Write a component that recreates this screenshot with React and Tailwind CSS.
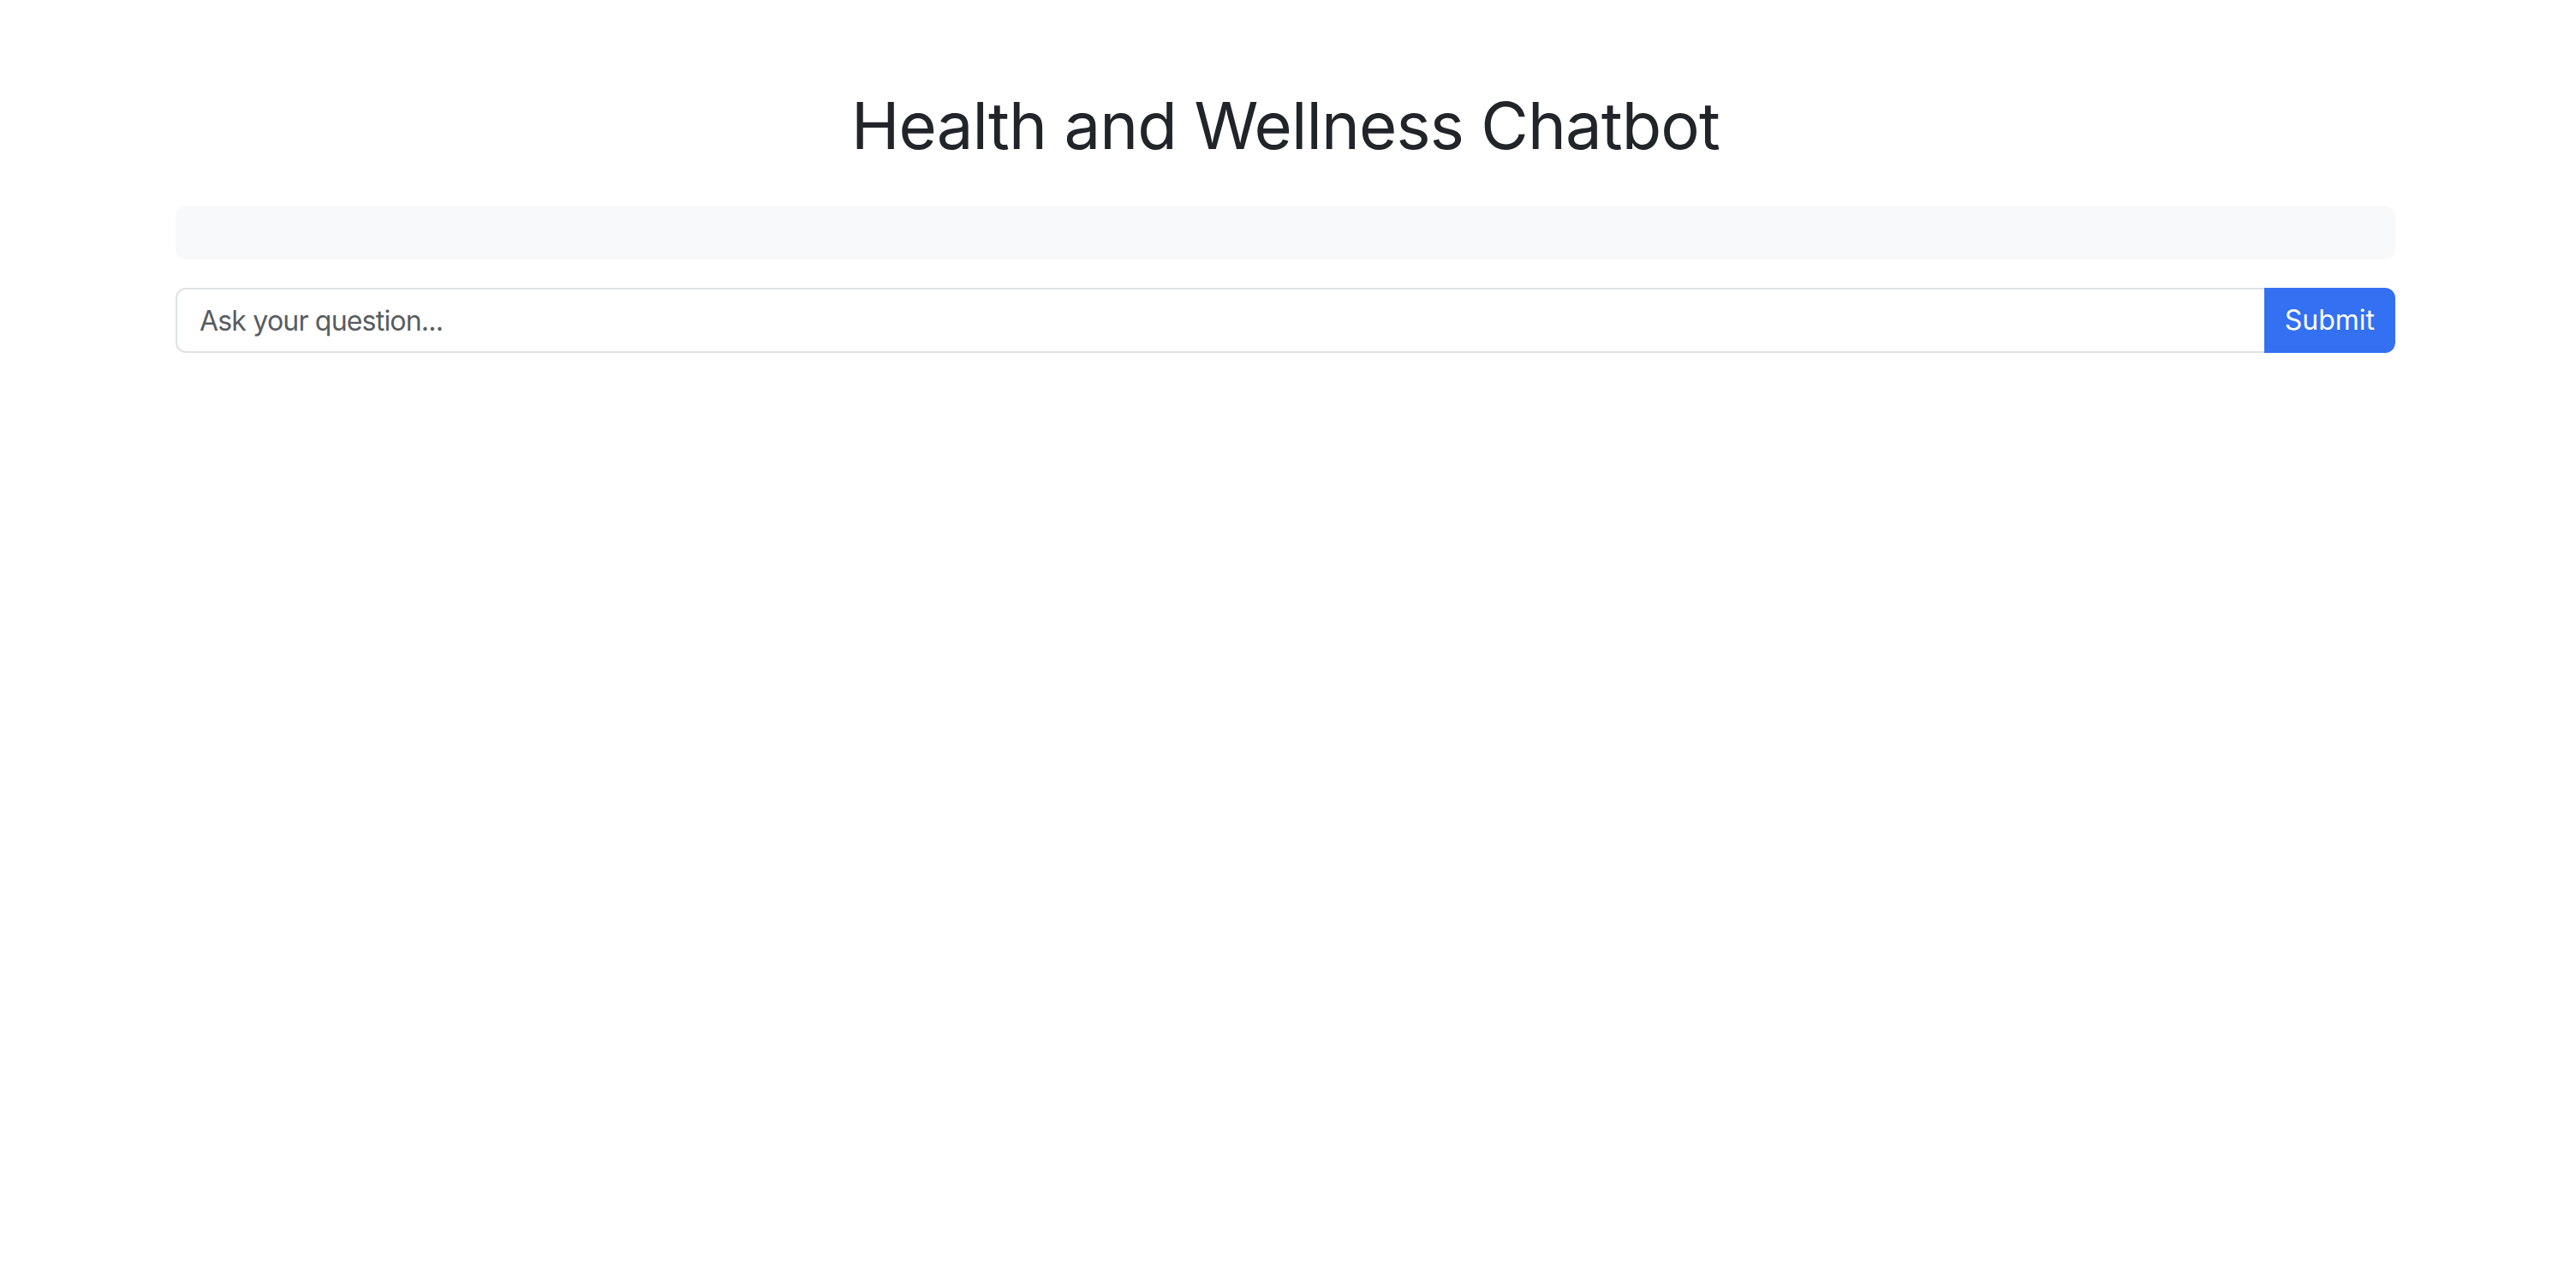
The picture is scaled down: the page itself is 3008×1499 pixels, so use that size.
import React from "react";

export default function App() {
  return (
    <div className="min-h-[1499px] bg-white text-[#212529]" style={{ fontFamily: "Inter, 'Noto Sans', sans-serif" }}>
      <div className="mx-auto w-[2640px] pl-[21px] pr-[27px] pt-[98px]">
        <h1 className="mb-[46px] text-center text-[76px] font-normal leading-[96px] tracking-[-0.9px]">
          Health and Wellness Chatbot
        </h1>
        <div className="mb-[33px] h-[63px] rounded-[12px] bg-[#f8f9fa]"></div>
        <div className="flex h-[76px]">
          <input
            type="text"
            placeholder="Ask your question..."
            className="h-full flex-1 rounded-l-[12px] border-2 border-[#dee2e6] bg-white px-[26px] text-[32px] tracking-[-0.8px] text-[#212529] outline-none placeholder:text-[#595c5f]"
          />
          <button className="-ml-[2px] h-full rounded-r-[12px] bg-[#3370f2] px-[24px] text-[32px] text-white">
            Submit
          </button>
        </div>
      </div>
    </div>
  );
}
